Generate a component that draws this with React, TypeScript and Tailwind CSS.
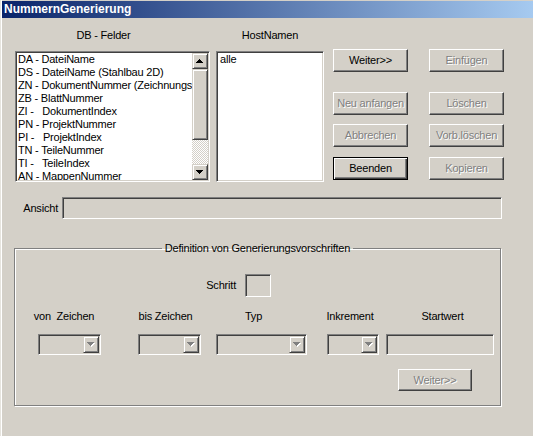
import React from "react"

const sunken =
  "border border-t-[#808080] border-l-[#808080] border-b-white border-r-white shadow-[inset_1px_1px_0_#404040,inset_-1px_-1px_0_#d4d0c8]"
const raised =
  "border border-t-[#d4d0c8] border-l-[#d4d0c8] border-b-[#404040] border-r-[#404040] shadow-[inset_1px_1px_0_#fff,inset_-1px_-1px_0_#808080]"
const btnRaised =
  "border border-t-white border-l-white border-b-[#404040] border-r-[#404040] shadow-[inset_-1px_-1px_0_#808080]"
const disabledText = "text-[#808080] [text-shadow:1px_1px_0_#fff]"

function Arrow({ up = false, disabled = false }: { up?: boolean; disabled?: boolean }) {
  const rows = up
    ? [
        [3, 0, 1],
        [2, 1, 3],
        [1, 2, 5],
        [0, 3, 7],
      ]
    : [
        [0, 0, 7],
        [1, 1, 5],
        [2, 2, 3],
        [3, 3, 1],
      ]
  return (
    <svg width="8" height="5" viewBox="0 0 8 5" shapeRendering="crispEdges">
      {disabled &&
        rows.map(([x, y, w]) => <rect key={"s" + y} x={x + 1} y={y + 1} width={w} height={1} fill="#fff" />)}
      {rows.map(([x, y, w]) => (
        <rect key={y} x={x} y={y} width={w} height={1} fill={disabled ? "#808080" : "#000"} />
      ))}
    </svg>
  )
}

function Btn({
  label,
  disabled = false,
  isDefault = false,
  className = "",
}: {
  label: string
  disabled?: boolean
  isDefault?: boolean
  className?: string
}) {
  const frame = isDefault
    ? "border border-black shadow-[inset_1px_1px_0_#fff,inset_-1px_-1px_0_#404040,inset_-2px_-2px_0_#808080]"
    : btnRaised
  return (
    <div className={`${frame} ${className} flex items-center justify-center ${disabled ? disabledText : "text-black"}`}>
      {label}
    </div>
  )
}

function Combo({ w }: { w: string }) {
  return (
    <div className={`${sunken} ${w} h-[21px] p-px flex justify-end`}>
      <div className={`${raised} w-[16px] h-full flex items-center justify-center`}>
        <Arrow disabled />
      </div>
    </div>
  )
}

const fields = [
  "DA - DateiName",
  "DS - DateiName (Stahlbau 2D)",
  "ZN - DokumentNummer (Zeichnungsnummer)",
  "ZB - BlattNummer",
  "ZI -   DokumentIndex",
  "PN - ProjektNummer",
  "PI -   ProjektIndex",
  "TN - TeileNummer",
  "TI -   TeileIndex",
  "AN - MappenNummer",
]

export default function App() {
  return (
    <div className="w-[533px] h-[436px] bg-[#d4d0c8] flex flex-col overflow-hidden shadow-[inset_1px_0_0_#e6e4de,inset_2px_0_0_#fff] font-['Liberation_Sans',Arial,sans-serif] text-[11px] tracking-[-0.2px] text-black">
      {/* Title bar */}
      <div className="ml-[2px] mt-px h-[17px] bg-[linear-gradient(to_right,#0a246a,#a6caf0)] pl-[2px] text-white font-bold text-[12px] leading-[17px] tracking-normal">
        NummernGenerierung
      </div>

      {/* Lists and buttons */}
      <div className="flex pl-[15px]">
        <div className="w-[195px]">
          <div className="w-[177px] h-[33px] pt-[10px] text-center leading-[14px]">DB - Felder</div>
          <div className={`${sunken} h-[131px] p-px bg-white flex`}>
            <div className="flex-1 overflow-hidden pl-px">
              {fields.map((f) => (
                <div key={f} className="leading-[13px] whitespace-pre">
                  {f}
                </div>
              ))}
            </div>
            <div className="w-[16px] flex flex-col bg-[#d4d0c8]">
              <div className={`${raised} h-[16px] flex items-center justify-center`}>
                <Arrow up />
              </div>
              <div className={`${raised} h-[71px]`} />
              <div className="flex-1 bg-[repeating-conic-gradient(#fff_0_25%,#d4d0c8_0_50%)] bg-[length:2px_2px]" />
              <div className={`${raised} h-[16px] flex items-center justify-center`}>
                <Arrow />
              </div>
            </div>
          </div>
        </div>

        <div className="ml-[6px] w-[108px]">
          <div className="h-[33px] pt-[10px] text-center leading-[14px]">HostNamen</div>
          <div className={`${sunken} h-[131px] p-px bg-white`}>
            <div className="pl-[2px] leading-[13px]">alle</div>
          </div>
        </div>

        <div className="ml-[9px] w-[75px] pt-[31px] flex flex-col">
          <Btn label="Weiter>>" className="h-[23px]" />
          <Btn label="Neu anfangen" disabled className="h-[23px] mt-[20px]" />
          <Btn label="Abbrechen" disabled className="h-[23px] mt-[9px]" />
          <Btn label="Beenden" isDefault className="h-[23px] mt-[10px]" />
        </div>

        <div className="ml-[21px] w-[75px] pt-[31px] flex flex-col">
          <Btn label="Einfügen" disabled className="h-[23px]" />
          <Btn label="Löschen" disabled className="h-[23px] mt-[20px]" />
          <Btn label="Vorb.löschen" disabled className="h-[23px] mt-[9px]" />
          <Btn label="Kopieren" disabled className="h-[23px] mt-[10px]" />
        </div>
      </div>

      {/* Ansicht */}
      <div className="mt-[15px] flex items-center h-[22px]">
        <div className="w-[58px] text-right">Ansicht</div>
        <div className={`${sunken} ml-[4px] w-[440px] h-[22px]`} />
      </div>

      {/* Group box */}
      <fieldset className="ml-[14px] mt-[22px] w-[487px] border border-[#808080] shadow-[inset_1px_1px_0_#fff,1px_1px_0_#fff] pb-[14px]">
        <legend className="mx-auto px-[3px] leading-[14px]">Definition von Generierungsvorschriften</legend>

        <div className="mt-[19px] flex items-center h-[23px]">
          <div className="w-[221px] text-right">Schritt</div>
          <div className={`${sunken} ml-[9px] w-[26px] h-[23px]`} />
        </div>

        <div className="mt-[12px] flex leading-[14px] whitespace-pre">
          <div className="w-[98px] text-center">von  Zeichen</div>
          <div className="w-[105px] text-center">bis Zeichen</div>
          <div className="w-[71px] text-center">Typ</div>
          <div className="w-[122px] text-center">Inkrement</div>
          <div className="w-[63px] text-center">Startwert</div>
        </div>

        <div className="mt-[11px] flex">
          <div className="ml-[23px]">
            <Combo w="w-[63px]" />
          </div>
          <div className="ml-[37px]">
            <Combo w="w-[63px]" />
          </div>
          <div className="ml-[15px]">
            <Combo w="w-[91px]" />
          </div>
          <div className="ml-[20px]">
            <Combo w="w-[52px]" />
          </div>
          <div className={`${sunken} ml-[7px] w-[108px] h-[21px]`} />
        </div>

        <Btn label="Weiter>>" disabled className="mt-[14px] ml-[383px] w-[74px] h-[22px]" />
      </fieldset>
    </div>
  )
}
